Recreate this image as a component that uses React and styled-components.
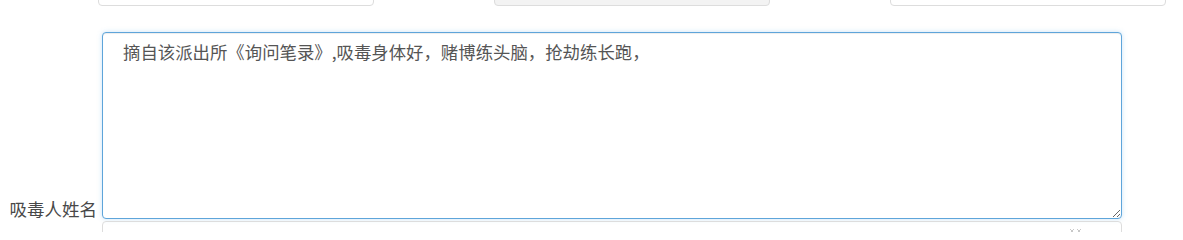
import React from 'react';
import styled, {createGlobalStyle} from 'styled-components';

const GlobalStyle = createGlobalStyle`
  html, body {
    margin:0;
    padding:0;
    background:#fff;
    overflow:hidden;
  }
  body {
    font-family:"Microsoft YaHei","Noto Sans CJK SC",sans-serif;
    color:#333;
  }
`;

const Page = styled.div`
  width:1183px;
  height:232px;
  overflow:hidden;
`;

const TopRow = styled.div`
  display:grid;
  grid-template-columns:276px 276px 276px;
  column-gap:120px;
  padding-left:98px;
  margin-top:-28px;
`;

const TopInput = styled.div`
  box-sizing:border-box;
  height:34px;
  border:1px solid #ddd;
  border-radius:4px;
  background:${props => (props.disabled ? '#f3f3f3' : '#fff')};
  box-shadow:inset 0 1px 1px rgba(0,0,0,.05);
`;

const FormRow = styled.div`
  display:flex;
  align-items:flex-end;
  margin-top:26px;
`;

const Label = styled.label`
  box-sizing:border-box;
  width:102px;
  padding-right:5px;
  text-align:right;
  font-size:17.5px;
  line-height:20px;
  color:#484848;
  white-space:nowrap;
`;

const Note = styled.textarea`
  box-sizing:border-box;
  display:block;
  width:1020px;
  height:187px;
  margin:0;
  padding:7px 20px;
  border:1px solid #5ea5da;
  border-radius:4px;
  outline:none;
  font-family:"Microsoft YaHei","Noto Sans CJK SC",sans-serif;
  font-size:17.4px;
  line-height:24px;
  color:#555;
  background:#fff;
  box-shadow:inset 0 1px 1px rgba(0,0,0,.075), 0 0 5px rgba(102,175,233,.35);
  resize:both;
`;

const NextRow = styled.div`
  padding-left:102px;
  margin-top:2px;
`;

const NextInput = styled.div`
  position:relative;
  box-sizing:border-box;
  width:1020px;
  height:34px;
  border:1px solid #ddd;
  border-radius:4px;
`;

const ClearMark = styled.svg`
  position:absolute;
  top:6px;
  right:38px;
`;

const App = () => {
  return (
    <Page>
      <GlobalStyle />
      <TopRow>
        <TopInput />
        <TopInput disabled />
        <TopInput />
      </TopRow>
      <FormRow>
        <Label>吸毒人姓名</Label>
        <Note
          readOnly
          defaultValue='摘自该派出所《询问笔录》,吸毒身体好，赌博练头脑，抢劫练长跑，'
        />
      </FormRow>
      <NextRow>
        <NextInput>
          <ClearMark width='14' height='8' viewBox='0 0 14 8'>
            <path d='M1 1l4 4M5 1L1 5M8 1l4 4M12 1L8 5' stroke='#c8c8c8' strokeWidth='1' fill='none' />
          </ClearMark>
        </NextInput>
      </NextRow>
    </Page>
  );
};

export default App;
